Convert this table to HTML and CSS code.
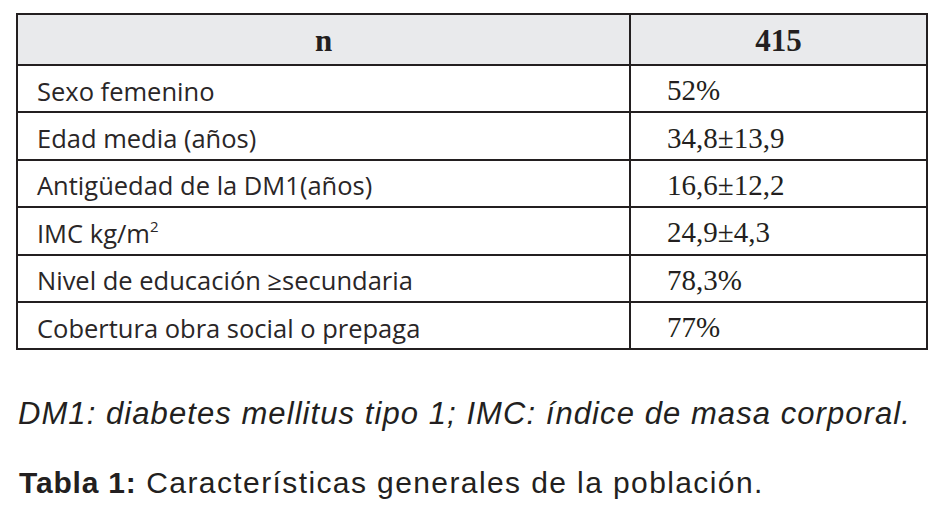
FILE: index.html
```html
<!DOCTYPE html>
<html lang="es">
<head>
<meta charset="utf-8">
<title>Tabla 1</title>
<link rel="stylesheet" href="styles.css">
</head>
<body>
<main class="page">
  <table class="data">
    <thead>
      <tr class="head-row">
        <th class="col-label">n</th>
        <th class="col-value">415</th>
      </tr>
    </thead>
    <tbody>
      <tr><td class="label">Sexo femenino</td><td class="value">52%</td></tr>
      <tr><td class="label">Edad media (años)</td><td class="value">34,8±13,9</td></tr>
      <tr><td class="label">Antigüedad de la DM1(años)</td><td class="value">16,6±12,2</td></tr>
      <tr><td class="label">IMC kg/m<sup class="sup">2</sup></td><td class="value">24,9±4,3</td></tr>
      <tr><td class="label">Nivel de educación ≥secundaria</td><td class="value">78,3%</td></tr>
      <tr><td class="label">Cobertura obra social o prepaga</td><td class="value">77%</td></tr>
    </tbody>
  </table>
  <p class="note">DM1: diabetes mellitus tipo 1; IMC: índice de masa corporal.</p>
  <p class="caption"><strong class="caption-label">Tabla 1:</strong> Características generales de la población.</p>
</main>
</body>
</html>
```

FILE: styles.css
```css
html, body {
  margin: 0;
  padding: 0;
  background: #ffffff;
}

.page {
  padding: 13px 0 0 16px;
  color: #231f20;
}

.data {
  width: 912px;
  border-collapse: collapse;
  table-layout: fixed;
}

.data th,
.data td {
  border: 2px solid #231f20;
  padding: 0;
}

.col-label {
  width: 611px;
}

.head-row {
  height: 51px;
  background: #e9eaec;
}

.head-row th {
  font-family: "Liberation Serif", serif;
  font-weight: bold;
  font-size: 31px;
  text-align: center;
  vertical-align: middle;
  padding-top: 2px;
}

.data tbody tr {
  height: 47.4px;
}

.label {
  font-family: "Open Sans", sans-serif;
  font-size: 25.5px;
  color: #2a2627;
  padding: 4px 0 0 19px !important;
  vertical-align: middle;
  white-space: nowrap;
}

.value {
  font-family: "Liberation Serif", serif;
  font-size: 29px;
  padding: 4px 0 0 36px !important;
  vertical-align: middle;
  white-space: nowrap;
}

.sup {
  font-size: 15px;
  vertical-align: 11px;
  line-height: 0;
}

.note {
  margin: 46px 0 0 2px;
  font-family: "Liberation Sans", sans-serif;
  font-style: italic;
  font-size: 31px;
  line-height: 36px;
  letter-spacing: 1.07px;
  white-space: nowrap;
}

.caption {
  margin: 33px 0 0 3px;
  font-family: "Liberation Sans", sans-serif;
  font-size: 30px;
  line-height: 36px;
  letter-spacing: 1.4px;
  white-space: nowrap;
}

.caption-label {
  font-weight: bold;
  letter-spacing: 0.8px;
}
```
